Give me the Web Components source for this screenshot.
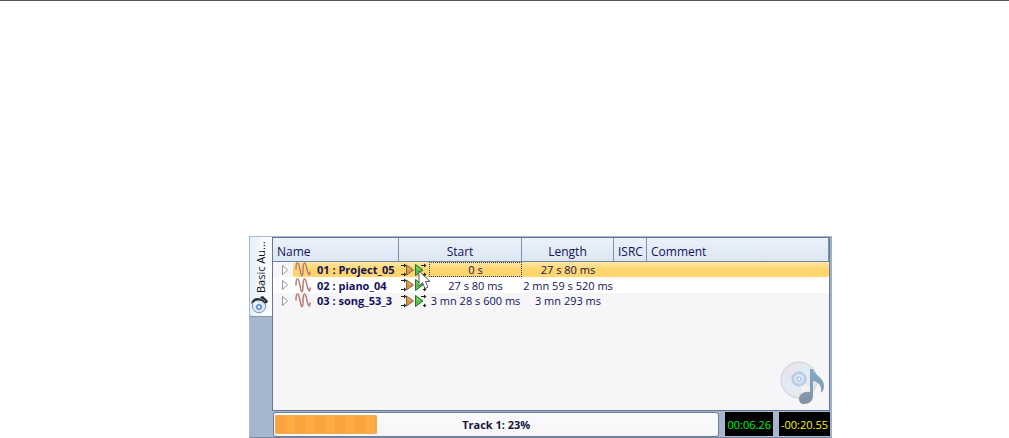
<!DOCTYPE html>
<html lang="en">
<head>
<meta charset="utf-8">
<title>Basic Audio CD</title>
<style>
    body {
        margin: 0;
        min-height: 100vh;
        box-sizing: border-box;
        display: flex;
        flex-direction: column;
        border-top: 1px solid #57575a;
        padding: 235px 177px 0 249px;
        background: #fff;
        color: #12125c;
        font: 12px/16px "Open Sans", "Noto Sans", sans-serif;
    }
</style>
</head>
<body>
<cd-window>
    <side-tab slot="tabs">Basic Au...</side-tab>
    <track-list></track-list>
    <play-progress slot="status" value="23">Track 1: 23%</play-progress>
    <time-readout slot="status">00:06.26</time-readout>
    <time-readout slot="status" remaining>-00:20.55</time-readout>
</cd-window>

<template id="cd-window">
    <style>
        :host {
            flex: 1;
            display: grid;
            grid-template-columns: 23px 1fr;
            box-sizing: border-box;
            border: 1px solid #a9b8cd;
            border-right: 2px solid #9fb1c9;
            border-bottom: 1px solid #74869f;
            background: #a6b6cf;
        }
        .main {
            display: flex;
            flex-direction: column;
            min-width: 0;
        }
        .content {
            flex: 1;
            display: flex;
            flex-direction: column;
            border: 1px solid #66788f;
            margin-left: -1px;
            background: #f6f6f9;
        }
        .status {
            display: flex;
            gap: 6px;
            padding: 1px 0 0;
        }
    </style>
    <slot name="tabs"></slot>
    <div class="main">
        <div class="content"><slot></slot></div>
        <div class="status"><slot name="status"></slot></div>
    </div>
</template>

<template id="side-tab">
    <style>
        :host {
            display: block;
        }
        button {
            display: flex;
            flex-direction: column;
            align-items: center;
            gap: 3px;
            width: 22px;
            height: 80px;
            padding: 5px 0 0;
            border: 0;
            border-bottom: 1px solid #8796b0;
            border-radius: 0 0 0 3px;
            background: linear-gradient(90deg, #e4f0fa, #f8fafd 60%);
            color: #101018;
            font: 11px/16px "Open Sans", sans-serif;
        }
        span {
            writing-mode: vertical-rl;
            transform: rotate(180deg);
            white-space: nowrap;
            height: 51px;
        }
        svg {
            flex: none;
            margin-right: 4px;
        }
    </style>
    <button type="button">
        <span><slot></slot></span>
        <svg width="17" height="18" viewBox="0 0 17 18">
            <circle cx="8" cy="10" r="6.7" fill="#dce8f6" stroke="#7f93b3"/>
            <path d="M8 10 2 8A6 6 0 0 1 5 5Z" fill="#fff"/>
            <circle cx="8" cy="11" r="3" fill="#5d92cf"/>
            <circle cx="8" cy="11" r="1.2" fill="#fff"/>
            <path d="M0 8C1 2 6 1 10 3l-1-2 3-1 5 5c0 2-3 3-4 2C10 4 6 4 3 6Z" fill="#26323c"/>
            <path d="M10 3q3 0 4 3" fill="none" stroke="#75858f"/>
        </svg>
    </button>
</template>

<template id="wave-icon">
    <style>
        :host { display: block; width: 17px; height: 15px; }
        svg { display: block; }
    </style>
    <svg width="17" height="15" viewBox="0 0 17 15" fill="none" stroke-linecap="round">
        <path d="M1 7C1 2 2 0 3 1S5 8 6 12 8 13 8 8 9 0 10 1 12 8 13 11 15 14 15 10" stroke="#d9b3a8" stroke-width="2" opacity=".6"/>
        <path d="M1 7C1 2 2 0 3 1S5 8 6 12 8 13 8 8 9 0 10 1 12 8 13 11 15 14 15 10" stroke="#a4625c"/>
    </svg>
</template>

<template id="transport-icon">
    <style>
        :host { display: block; width: 13px; height: 14px; }
        svg { display: block; }
        .post { display: none; }
        :host([post]) .pre { display: none; }
        :host([post]) .post { display: inline; }
    </style>
    <svg width="13" height="14" viewBox="0 0 13 14">
        <g class="pre">
            <path d="M0 2.500H4M0 11.500H4" stroke="#262616"/>
            <path d="M3 .5 5.500 2.500 3 4.500ZM3 9.500 5.500 11.500 3 13.500Z" fill="#262616"/>
            <path d="M5.500 2 12.500 7 5.500 12Z" fill="#d39649" stroke="#8a6530"/>
            <path d="M6.500 4.500 9 6.500" stroke="#edbd7b"/>
        </g>
        <g class="post">
            <path d="M7 2.500H11M9 11.500H11" stroke="#262616"/>
            <path d="M10 .5 12.500 2.500 10 4.500ZM10 9.500 12.500 11.500 10 13.500Z" fill="#262616"/>
            <path d="M1.500 1.500 9 7 1.500 12.500Z" fill="#5abf52" stroke="#277126"/>
            <path d="M2.500 4.500 5 6.500" stroke="#a4df87"/>
        </g>
    </svg>
</template>

<template id="track-list">
    <style>
        :host {
            flex: 1;
            display: flex;
            flex-direction: column;
            justify-content: space-between;
        }
        table {
            width: 100%;
            table-layout: fixed;
            border-collapse: separate;
            border-spacing: 0;
        }
        th {
            height: 23px;
            padding: 0 4px;
            border-right: 1px solid #8093ad;
            border-bottom: 1px solid #71839e;
            background: linear-gradient(#eaf1f9, #dce7f3);
            font-weight: 400;
            line-height: 18px;
            text-align: center;
            vertical-align: bottom;
        }
        th.left { text-align: left; }
        td {
            height: 15px;
            padding: 0;
            font-size: 11px;
            line-height: 15px;
            text-align: center;
            white-space: nowrap;
        }
        tr:nth-child(even) td {
            height: 16px;
            background: #fff;
        }
        tr.current td:not(.twisty) { background: linear-gradient(#fee7a4, #fed56c 50%, #ffd66e); }
        tr.current td.name { border-radius: 3px 0 0 3px; }
        tr.current td:last-child { border-radius: 0 2px 2px 0; }
        tr.current td.start {
            outline: 1px dotted #30305a;
            outline-offset: -1px;
        }
        button {
            display: block;
            position: relative;
            padding: 0;
            border: 0;
            background: none;
        }
        .twisty button { margin-left: 8px; }
        .twisty svg { display: block; }
        .name div {
            display: flex;
            align-items: center;
            gap: 5px;
            padding-left: 2px;
            font-weight: 700;
        }
        .transport div {
            display: flex;
            padding-left: 2px;
        }
        .watermark {
            align-self: flex-end;
            margin: 0 4px 4px 0;
        }
        .pointer {
            position: absolute;
            top: 7px;
            left: 4px;
            pointer-events: none;
            z-index: 1;
        }
    </style>
    <table>
        <colgroup>
            <col style="width: 20px"><col style="width: 106px"><col style="width: 30px">
            <col style="width: 93px"><col style="width: 92px"><col style="width: 33px"><col>
        </colgroup>
        <thead>
            <tr>
                <th class="left" colspan="2">Name</th>
                <th colspan="2">Start</th>
                <th>Length</th>
                <th>ISRC</th>
                <th class="left">Comment</th>
            </tr>
        </thead>
        <tbody></tbody>
    </table>
    <svg class="watermark" width="45" height="47" viewBox="0 0 45 47">
        <defs>
            <linearGradient id="disc" x2="1" y2="1">
                <stop offset="0" stop-color="#e1e2ec"/><stop offset=".25" stop-color="#eae4f0"/>
                <stop offset=".4" stop-color="#e2ebf2"/><stop offset="1" stop-color="#e8e9ec"/>
            </linearGradient>
            <linearGradient id="note" x2="0" y2="1">
                <stop offset="0" stop-color="#80adc9"/><stop offset="1" stop-color="#82909f"/>
            </linearGradient>
        </defs>
        <circle cx="19" cy="21" r="18" fill="url(#disc)" stroke="#ceced9"/>
        <path d="M19 21 4 14Q7 7 12 5Z" fill="#ece2ec"/>
        <path d="M19 21 2 18 4 13Z" fill="#dde8f2"/>
        <path d="M19 21 34 31Q29 37 23 38Z" fill="#f2f2f3"/>
        <circle cx="19" cy="20" r="7" fill="#bfd5ed" stroke="#a6c1df"/>
        <circle cx="19" cy="20" r="4" fill="#cbdef1" stroke="#e2edf7"/>
        <circle cx="19" cy="20" r="2" fill="#f6f8fb" stroke="#a2bcda"/>
        <path d="M30 10h3c1 6 11 8 11 17 0 3-1 5-3 7 1-7-2-11-8-12v15c0 5-4 8-9 8-3 0-5-2-5-5 0-5 5-8 11-7Z" fill="url(#note)"/>
    </svg>
</template>

<template id="play-progress">
    <style>
        :host {
            flex: 1;
            display: grid;
            box-sizing: border-box;
            height: 25px;
            padding: 2px 1px;
            border: 1px solid #6e7d91;
            border-radius: 3px;
            background: linear-gradient(#fbfbfd, #f5f5f8);
            color: #16163e;
            font-size: 11px;
            font-weight: 700;
        }
        .bar, .label { grid-area: 1 / 1; }
        .bar {
            border-radius: 2px;
            box-shadow: inset 0 0 0 1px #f6a94d;
            background: repeating-linear-gradient(90deg, #fba33b 0 10px, #ffaa43 10px 20px);
        }
        .label {
            place-self: center;
        }
    </style>
    <div class="bar"></div>
    <div class="label"><slot></slot></div>
</template>

<template id="time-readout">
    <style>
        :host {
            display: block;
            box-sizing: border-box;
            height: 24px;
            padding: 0 2px;
            background: #000;
            color: #00f81c;
            font-size: 11px;
            line-height: 25px;
            white-space: nowrap;
        }
        :host([remaining]) {
            color: #f8f800;
        }
    </style>
    <slot></slot>
</template>

<script>
const stamp = (el, id) => {
    el.attachShadow({mode: 'open'})
    el.shadowRoot.appendChild(document.getElementById(id).content.cloneNode(true))
}

const tracks = [
    {name: '01 : Project_05', start: '0 s', length: '27 s 80 ms'},
    {name: '02 : piano_04', start: '27 s 80 ms', length: '2 mn 59 s 520 ms'},
    {name: '03 : song_53_3', start: '3 mn 28 s 600 ms', length: '3 mn 293 ms'}
]

const pointer = `
    <svg class="pointer" width="13" height="20" viewBox="0 0 13 20">
        <path d="M1 1V16L4.500 12.500 7 18.500 10 17 7.500 11.500H12Z" fill="#fff" stroke="#555b66"/>
    </svg>`

class CdWindow extends HTMLElement {
    constructor() {
        super()
        stamp(this, 'cd-window')
    }
}

class SideTab extends HTMLElement {
    constructor() {
        super()
        stamp(this, 'side-tab')
    }
}

class WaveIcon extends HTMLElement {
    constructor() {
        super()
        stamp(this, 'wave-icon')
    }
}

class TransportIcon extends HTMLElement {
    constructor() {
        super()
        stamp(this, 'transport-icon')
    }
}

class TrackList extends HTMLElement {
    constructor() {
        super()
        stamp(this, 'track-list')
    }

    connectedCallback() {
        this.body = this.shadowRoot.querySelector('tbody')
        this.body.innerHTML = tracks.map((track, i) => this.row(track, i === 0)).join('')
    }

    row(track, current) {
        return `
            <tr class="${current ? 'current' : ''}">
                <td class="twisty"><button type="button" aria-label="Expand"><svg width="8" height="10" viewBox="0 0 8 10"><path d="M1.500 .5 6.500 5 1.500 9.500Z" fill="#fff" stroke="#949499"/></svg></button></td>
                <td class="name"><div><wave-icon></wave-icon>${track.name}</div></td>
                <td class="transport"><div>
                    <button type="button" aria-label="Play with pre-roll"><transport-icon></transport-icon></button>
                    <button type="button" aria-label="Play with post-roll"><transport-icon post></transport-icon>${current ? pointer : ''}</button>
                </div></td>
                <td class="start">${track.start}</td>
                <td>${track.length}</td>
                <td></td>
                <td></td>
            </tr>`
    }
}

class PlayProgress extends HTMLElement {
    constructor() {
        super()
        stamp(this, 'play-progress')
    }

    connectedCallback() {
        this.setAttribute('role', 'progressbar')
        this.setAttribute('aria-valuenow', this.getAttribute('value'))
        this.shadowRoot.querySelector('.bar').style.width = this.getAttribute('value') + '%'
    }
}

class TimeReadout extends HTMLElement {
    constructor() {
        super()
        stamp(this, 'time-readout')
    }
}

window.customElements.define('cd-window', CdWindow)
window.customElements.define('side-tab', SideTab)
window.customElements.define('wave-icon', WaveIcon)
window.customElements.define('transport-icon', TransportIcon)
window.customElements.define('track-list', TrackList)
window.customElements.define('play-progress', PlayProgress)
window.customElements.define('time-readout', TimeReadout)
</script>
</body>
</html>
